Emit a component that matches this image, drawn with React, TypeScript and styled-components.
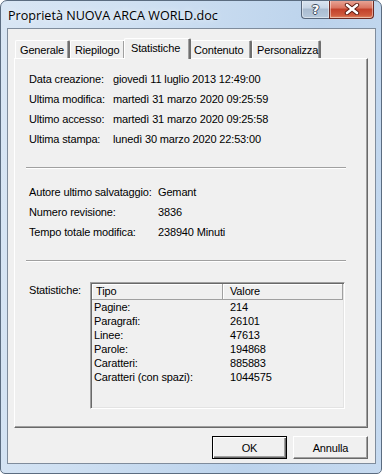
import React from "react";
import styled, { createGlobalStyle } from "styled-components";

const GlobalStyle = createGlobalStyle`
  html, body {
    margin: 0;
    padding: 0;
    background: #ffffff;
  }
  body {
    font-family: "Liberation Sans", Arial, sans-serif;
    font-size: 11px;
    letter-spacing: -0.15px;
    color: #000;
  }
`;

const dates = [
  ["Data creazione:", "giovedì 11 luglio 2013 12:49:00"],
  ["Ultima modifica:", "martedì 31 marzo 2020 09:25:59"],
  ["Ultimo accesso:", "martedì 31 marzo 2020 09:25:58"],
  ["Ultima stampa:", "lunedì 30 marzo 2020 22:53:00"],
];

const info = [
  ["Autore ultimo salvataggio:", "Gemant"],
  ["Numero revisione:", "3836"],
  ["Tempo totale modifica:", "238940 Minuti"],
];

const stats = [
  ["Pagine:", "214"],
  ["Paragrafi:", "26101"],
  ["Linee:", "47613"],
  ["Parole:", "194868"],
  ["Caratteri:", "885883"],
  ["Caratteri (con spazi):", "1044575"],
];

// widths read off the reference tab strip
const tabs: [string, number][] = [
  ["Generale", 55],
  ["Riepilogo", 56],
  ["Statistiche", 63],
  ["Contenuto", 63],
  ["Personalizza", 69],
];

const CloseGlyph = () => (
  <svg width="16" height="12" viewBox="0 0 16 12">
    <path
      d="M3 2 L13 10 M13 2 L3 10"
      stroke="#5a1a10"
      strokeWidth="4.4"
      strokeLinecap="round"
    />
    <path
      d="M3 2 L13 10 M13 2 L3 10"
      stroke="#ffffff"
      strokeWidth="2.6"
      strokeLinecap="round"
    />
  </svg>
);

const App = () => {
  return (
    <>
      <GlobalStyle />
      <Window>
        <TitleBar>
          <Title>Proprietà NUOVA ARCA WORLD.doc</Title>
          <CaptionButtons>
            <HelpButton>?</HelpButton>
            <CloseButton>
              <CloseGlyph />
            </CloseButton>
          </CaptionButtons>
        </TitleBar>
        <Client>
          <TabStrip>
            {tabs.map(([t, w]) => (
              <Tab key={t} $width={w} $active={t === "Statistiche"}>
                {t}
              </Tab>
            ))}
          </TabStrip>
          <Panel>
            <Section>
              <InfoGrid $labelWidth={84}>
                {dates.map(([k, v]) => (
                  <React.Fragment key={k}>
                    <span>{k}</span>
                    <span>{v}</span>
                  </React.Fragment>
                ))}
              </InfoGrid>
            </Section>
            <Separator />
            <Section $top={13}>
              <InfoGrid $labelWidth={129}>
                {info.map(([k, v]) => (
                  <React.Fragment key={k}>
                    <span>{k}</span>
                    <span>{v}</span>
                  </React.Fragment>
                ))}
              </InfoGrid>
            </Section>
            <Separator />
            <StatsArea>
              <StatsLabel>Statistiche:</StatsLabel>
              <ListBox>
                <ListHeader>
                  <HeaderCell $width={131}>Tipo</HeaderCell>
                  <HeaderCell $width={120} $second>
                    Valore
                  </HeaderCell>
                </ListHeader>
                {stats.map(([k, v]) => (
                  <ListRow key={k}>
                    <Cell $width={131}>{k}</Cell>
                    <Cell $second>{v}</Cell>
                  </ListRow>
                ))}
              </ListBox>
            </StatsArea>
          </Panel>
          <ButtonRow>
            <DialogButton $default>OK</DialogButton>
            <DialogButton>Annulla</DialogButton>
          </ButtonRow>
        </Client>
      </Window>
    </>
  );
};

export default App;

const Window = styled.div`
  width: 382px;
  height: 474px;
  box-sizing: border-box;
  border: 1px solid #5b6c80;
  border-radius: 7px 7px 5px 5px;
  background: linear-gradient(
    100deg,
    #d9e6f4 0%,
    #cfe0f2 30%,
    #bcd3ec 70%,
    #c6daf0 100%
  );
  padding: 0 5px 9px 6px;
  display: flex;
  flex-direction: column;
  overflow: hidden;
`;

const TitleBar = styled.div`
  height: 27px;
  display: flex;
  align-items: flex-start;
  justify-content: space-between;
`;

const Title = styled.div`
  font-family: "Open Sans", "Liberation Sans", sans-serif;
  font-size: 12.6px;
  letter-spacing: 0;
  color: #000;
  padding: 6px 0 0 1px;
  text-shadow: 0 0 6px rgba(255, 255, 255, 0.9);
`;

const CaptionButtons = styled.div`
  display: flex;
  margin-top: -1px;
  margin-right: 2px;
`;

const CaptionButton = styled.div`
  height: 19px;
  box-sizing: border-box;
  border: 1px solid #58677c;
  border-top: none;
  display: flex;
  align-items: center;
  justify-content: center;
  box-shadow: inset 0 0 0 1px rgba(255, 255, 255, 0.45);
`;

const HelpButton = styled(CaptionButton)`
  width: 28px;
  border-radius: 0 0 0 4px;
  border-right: none;
  background: linear-gradient(#dce6f1 0%, #c7d5e5 45%, #a9bbd0 50%, #b7c9dc 100%);
  font-family: "DejaVu Sans", sans-serif;
  font-weight: bold;
  font-size: 13px;
  color: #fff;
  text-shadow:
    1px 0 0 #3f4d60,
    -1px 0 0 #3f4d60,
    0 1px 0 #3f4d60,
    0 -1px 0 #3f4d60;
`;

const CloseButton = styled(CaptionButton)`
  width: 45px;
  border-radius: 0 0 4px 0;
  border-color: #6d2a22;
  background: linear-gradient(#e9a99b 0%, #d9735f 45%, #c2402a 50%, #cf5a3d 85%, #e08a64 100%);
`;

const Client = styled.div`
  flex: 1;
  background: #f0f0f0;
  border: 1px solid #7f8c9c;
  padding: 9px 7px 4px 6px;
  display: flex;
  flex-direction: column;
`;

const TabStrip = styled.div`
  display: flex;
  align-items: flex-end;
  height: 20px;
  padding-left: 1px;
  position: relative;
  z-index: 1;
`;

const Tab = styled.div<{ $active?: boolean; $width: number }>`
  box-sizing: border-box;
  width: ${(p) => p.$width + (p.$active ? 4 : 0)}px;
  height: ${(p) => (p.$active ? "21px" : "18px")};
  margin: ${(p) => (p.$active ? "0 -2px -1px" : "0")};
  padding: ${(p) => (p.$active ? "2px 0 0 6px" : "2px 0 0 4px")};
  background: #f0f0f0;
  border-top: 1px solid #ffffff;
  border-left: 1px solid #ffffff;
  border-right: 2px solid #6f6f6f;
  border-radius: 2px 2px 0 0;
  box-shadow: inset -1px 0 0 #a0a0a0;
  position: relative;
  z-index: ${(p) => (p.$active ? 2 : 0)};
  white-space: nowrap;
  line-height: 14px;
`;

const Panel = styled.div`
  flex: 1;
  box-sizing: border-box;
  border-top: 1px solid #ffffff;
  border-left: 1px solid #ffffff;
  border-right: 1px solid #696969;
  border-bottom: 1px solid #696969;
  box-shadow: inset -1px -1px 0 #a0a0a0;
  padding: 10px 21px 0 14px;
  display: flex;
  flex-direction: column;
`;

const Section = styled.div<{ $top?: number }>`
  padding: ${(p) => p.$top ?? 0}px 0 18px 0;
`;

const InfoGrid = styled.div<{ $labelWidth: number }>`
  display: grid;
  grid-template-columns: ${(p) => p.$labelWidth}px 1fr;
  grid-auto-rows: 20px;
  align-items: center;
  white-space: nowrap;
`;

const Separator = styled.div`
  height: 1px;
  margin-left: -3px;
  background: #a0a0a0;
  border-bottom: 1px solid #ffffff;
`;

const StatsArea = styled.div`
  display: flex;
  align-items: flex-start;
  padding-top: 20px;
`;

const StatsLabel = styled.div`
  width: 61px;
  padding-top: 2px;
`;

const ListBox = styled.div`
  width: 255px;
  height: 127px;
  box-sizing: border-box;
  border-top: 1px solid #a0a0a0;
  border-left: 1px solid #a0a0a0;
  border-right: 1px solid #ffffff;
  border-bottom: 1px solid #ffffff;
  box-shadow: inset 1px 1px 0 #696969, inset -1px -1px 0 #e3e3e3;
  padding: 1px;
  background: #f0f0f0;
`;

const ListHeader = styled.div`
  display: flex;
  height: 16px;
  box-sizing: border-box;
  border-bottom: 1px solid #a0a0a0;
  width: 251px;
`;

const HeaderCell = styled.div<{ $width: number; $second?: boolean }>`
  width: ${(p) => p.$width}px;
  box-sizing: border-box;
  padding-left: ${(p) => (p.$second ? "7px" : "4px")};
  line-height: 15px;
  border-right: 1px solid #a0a0a0;
  box-shadow: inset 1px 1px 0 #ffffff;
`;

const ListRow = styled.div`
  display: flex;
  height: 14px;
  line-height: 14px;
  white-space: nowrap;
`;

const Cell = styled.div<{ $width?: number; $second?: boolean }>`
  width: ${(p) => (p.$width ? `${p.$width}px` : "auto")};
  padding-left: ${(p) => (p.$second ? "7px" : "2px")};
  box-sizing: border-box;
`;

const ButtonRow = styled.div`
  display: flex;
  justify-content: flex-end;
  gap: 6px;
  padding-top: 8px;
`;

const DialogButton = styled.div<{ $default?: boolean }>`
  width: 75px;
  height: 23px;
  box-sizing: border-box;
  display: flex;
  align-items: center;
  justify-content: center;
  background: #f0f0f0;
  border-top: 1px solid ${(p) => (p.$default ? "#000" : "#ffffff")};
  border-left: 1px solid ${(p) => (p.$default ? "#000" : "#ffffff")};
  border-right: 1px solid ${(p) => (p.$default ? "#000" : "#696969")};
  border-bottom: 1px solid ${(p) => (p.$default ? "#000" : "#696969")};
  box-shadow: ${(p) =>
    p.$default
      ? "inset 1px 1px 0 #ffffff, inset -1px -1px 0 #696969, inset -2px -2px 0 #a0a0a0"
      : "inset -1px -1px 0 #a0a0a0"};
`;
